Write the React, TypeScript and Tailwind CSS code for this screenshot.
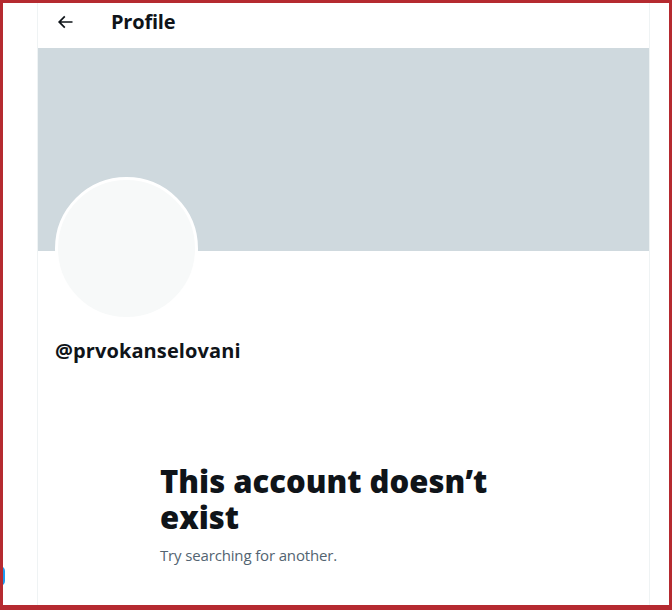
import React from "react";

export default function App() {
  return (
    <div
      className="relative w-[672px] h-[610px] overflow-hidden bg-white border-l-[3px] border-t-[3px] border-r-[3px] border-b-[5px] border-[#b52a30]"
      style={{ fontFamily: '"Open Sans", "Segoe UI", Arial, sans-serif' }}
    >
      <div className="absolute left-[-3px] top-[563px] w-[5px] h-[20px] rounded-r-full bg-[#1d9bf0]" />
      <div className="flex h-full">
        <div className="w-[34px] shrink-0" />
        <div className="w-[613px] shrink-0 border-x border-[#eff3f4] h-full flex flex-col">
          <div className="h-[45px] flex items-center pl-[9px] pb-[8px]">
            <div className="w-[36px] h-[36px] flex items-center justify-center">
              <svg viewBox="0 0 24 24" className="w-[20px] h-[20px]" fill="#0f1419">
                <path d="M7.414 13l5.043 5.04-1.414 1.42L3.586 12l7.457-7.46 1.414 1.42L7.414 11H21v2H7.414z" />
              </svg>
            </div>
            <div className="ml-[28px] text-[20px] font-bold text-[#0f1419] leading-[24px] tracking-[-0.2px]">
              Profile
            </div>
          </div>
          <div className="h-[203px] bg-[#cfd9de] shrink-0" />
          <div className="px-[17px]">
            <div className="mt-[-74px] w-[143px] h-[143px] rounded-full border-[3px] border-white bg-[#f7f9f9]" />
            <div className="mt-[19px] text-[20px] font-bold leading-[24px] text-[#0f1419] tracking-[0.1px]">
              @prvokanselovani
            </div>
          </div>
          <div className="ml-[122px] mt-[100px] w-[360px]">
            <div className="text-[31px] font-extrabold leading-[36px] text-[#0f1419] tracking-[0px]">
              This account doesn’t exist
            </div>
            <div className="mt-[10px] text-[15px] leading-[20px] text-[#536471] tracking-[-0.15px]">
              Try searching for another.
            </div>
          </div>
        </div>
      </div>
    </div>
  );
}
